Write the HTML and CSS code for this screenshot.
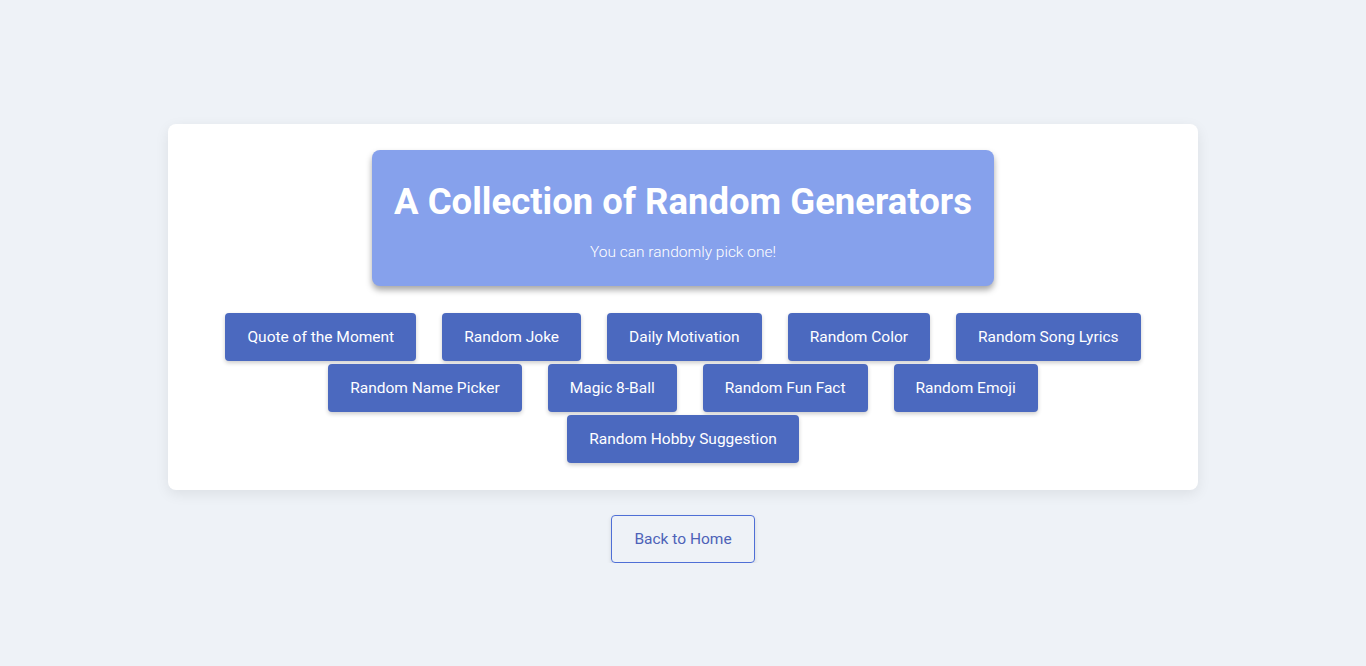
FILE: index.html
```html
<!DOCTYPE html>
<html lang="en">
<head>
<meta charset="utf-8">
<title>Random Generators</title>
<link rel="stylesheet" href="styles.css">
</head>
<body>
<main class="page">
  <section class="card">
    <header class="hero">
      <h1 class="hero-title">A Collection of Random Generators</h1>
      <p class="hero-sub">You can randomly pick one!</p>
    </header>
    <nav class="gen-list">
      <button class="gen-btn">Quote of the Moment</button>
      <button class="gen-btn">Random Joke</button>
      <button class="gen-btn">Daily Motivation</button>
      <button class="gen-btn">Random Color</button>
      <button class="gen-btn">Random Song Lyrics</button>
      <button class="gen-btn">Random Name Picker</button>
      <button class="gen-btn">Magic 8-Ball</button>
      <button class="gen-btn">Random Fun Fact</button>
      <button class="gen-btn">Random Emoji</button>
      <button class="gen-btn">Random Hobby Suggestion</button>
    </nav>
  </section>
  <button class="back-btn">Back to Home</button>
</main>
</body>
</html>
```
FILE: styles.css
```css
* { box-sizing: border-box; }
html, body { margin: 0; padding: 0; }
body {
  background: #eef2f7;
  font-family: Roboto, "Liberation Sans", sans-serif;
  color: #333;
}
.page {
  display: flex;
  flex-direction: column;
  align-items: center;
  padding-top: 124px;
}
.card {
  width: 1030px;
  background: #fff;
  border-radius: 8px;
  box-shadow: 0 4px 14px rgba(0, 0, 0, 0.08);
  padding: 26px 30px 27px;
  display: flex;
  flex-direction: column;
  align-items: center;
}
.hero {
  background: #86a1ec;
  border-radius: 8px;
  padding: 22px 22px 22px;
  box-shadow: 0 4px 6px rgba(0, 0, 0, 0.35);
  text-align: center;
  color: #fff;
}
.hero-title {
  margin: 0;
  font-size: 36.5px;
  line-height: 60px;
  font-weight: 700;
}
.hero-sub {
  margin: 8px 0 0;
  font-size: 15.5px;
  line-height: 24px;
  font-weight: 300;
}
.gen-list {
  margin-top: 27px;
  max-width: 950px;
  display: flex;
  flex-wrap: wrap;
  justify-content: center;
  column-gap: 26px;
  row-gap: 3px;
}
.gen-btn {
  font-family: inherit;
  font-size: 15.5px;
  line-height: 24px;
  padding: 12px 22px;
  border: none;
  border-radius: 4px;
  background: #4b69bf;
  color: #fff;
  box-shadow: 0 2px 4px rgba(0, 0, 0, 0.2);
  cursor: pointer;
}
.back-btn {
  margin-top: 25px;
  font-family: inherit;
  font-size: 15.5px;
  line-height: 24px;
  padding: 11px 22px;
  border: 1px solid #4f6fd6;
  border-radius: 4px;
  background: transparent;
  color: #4d62b8;
  box-shadow: 0 2px 4px rgba(0, 0, 0, 0.12);
  cursor: pointer;
}
```
